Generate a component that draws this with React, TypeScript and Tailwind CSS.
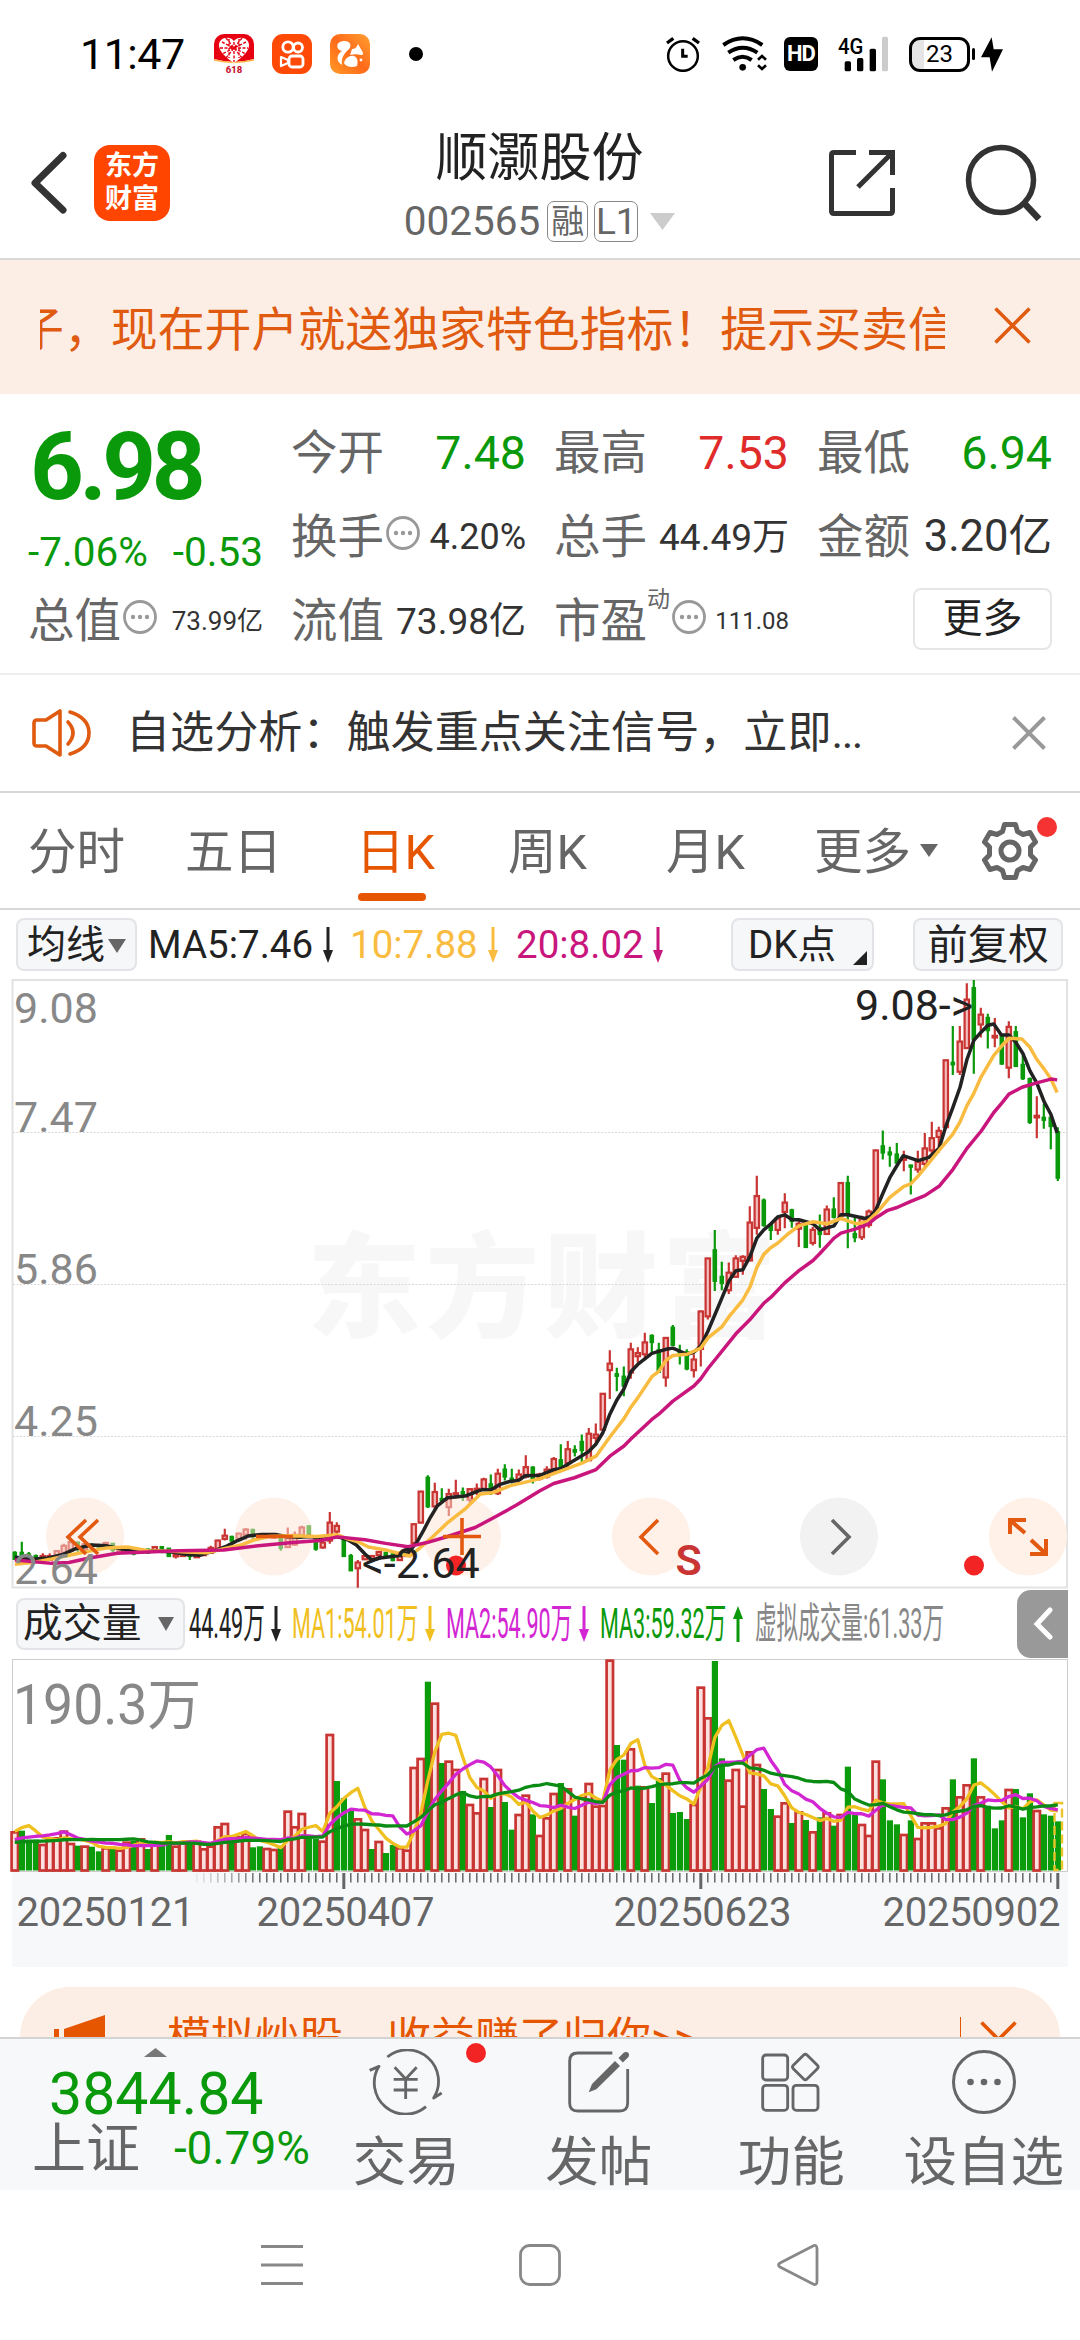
import { ReactNode } from "react";
import clsx from "clsx";

const GREEN = "#0a990a";
const RED = "#c83532";

// [color, bar top] - the baseline sits at 875, full height is 633
const volumes =
  "r757 g755 g782 g782 r795 r778 r775 r755 r792 g800 r800 g803 g817 r805 g803 r812 r788 g785 r778 g810 r788 g795 g768 r800 r790 " +
  "g788 r785 r808 r800 r742 r732 g780 r772 r762 g805 g802 r807 r810 g805 r695 r742 r702 g780 g780 r785 r465 g606 g657 g693 r718 " +
  "r750 g810 r786 g822 g798 r805 r812 r564 r537 g308 r371 g552 r545 r570 g636 r675 r700 r597 g684 r570 g669 g752 r705 r647 g706 " +
  "r768 r715 r642 g612 r628 g710 r655 r612 r680 r678 r242 g498 g542 r508 g620 r622 g672 g597 r581 g702 g699 g720 r675 r323 r415 " +
  "g246 g538 r602 r570 r680 r517 r555 g630 g690 r710 r670 g732 r697 g723 r757 g715 r700 g740 r705 g563 g708 r735 r768 r545 g601 " +
  "g724 g736 r765 g724 r777 r730 r730 r745 r685 g601 r652 r616 g538 r652 g680 g748 g724 r630 g630 g715 g643 r693 g706 g710 g727";

// color, high, body top, body bottom, low
const candles =
  "g1428,1432,1447,1449 g1405,1432,1447,1450 g1430,1436,1448,1450 g1436,1440,1450,1452 r1433,1440,1450,1452 r1433,1440,1449,1450 r1425,1428,1445,1447 r1410,1415,1432,1437 r1400,1406,1425,1430 g1405,1407,1420,1430 " +
  "r1408,1411,1425,1427 g1408,1412,1422,1428 g1410,1414,1420,1422 r1405,1408,1415,1420 g1408,1410,1425,1430 r1418,1420,1428,1430 r1418,1422,1428,1430 g1420,1424,1434,1438 r1425,1427,1432,1434 g1422,1424,1432,1434 " +
  "r1416,1418,1426,1430 g1416,1418,1428,1433 g1420,1422,1440,1442 r1432,1437,1441,1446 r1428,1434,1440,1442 g1428,1430,1440,1450 r1433,1437,1443,1445 r1425,1430,1438,1440 r1415,1420,1432,1434 r1400,1402,1422,1425 " +
  "r1373,1390,1398,1402 g1390,1393,1402,1408 r1383,1385,1398,1400 r1372,1375,1388,1400 g1373,1376,1392,1398 r1385,1388,1395,1396 r1385,1388,1394,1396 r1385,1388,1395,1398 g1390,1392,1420,1427 r1370,1395,1418,1420 " +
  "r1380,1388,1412,1415 r1366,1370,1390,1392 g1366,1367,1388,1390 g1390,1395,1422,1427 r1400,1407,1419,1422 r1332,1358,1402,1410 r1357,1366,1380,1386 g1400,1402,1440,1442 g1435,1440,1475,1477 r1450,1456,1470,1518 " +
  "r1438,1440,1448,1450 r1438,1440,1448,1450 r1428,1430,1438,1440 g1430,1432,1440,1442 g1432,1436,1450,1453 r1435,1440,1450,1452 r1430,1432,1440,1442 r1360,1362,1408,1412 r1280,1282,1358,1360 g1242,1248,1318,1322 " +
  "r1260,1283,1318,1330 g1274,1300,1302,1310 r1275,1288,1320,1342 r1253,1286,1289,1300 g1272,1283,1286,1305 r1274,1276,1302,1310 r1262,1275,1278,1290 r1248,1252,1276,1278 g1240,1264,1275,1290 r1226,1238,1286,1290 " +
  "g1215,1228,1245,1255 g1226,1250,1255,1262 r1228,1240,1252,1254 r1193,1222,1245,1250 g1220,1223,1250,1262 r1236,1240,1250,1255 r1220,1228,1245,1250 r1197,1202,1235,1237 g1166,1205,1220,1222 r1158,1178,1212,1222 " +
  "g1168,1180,1184,1196 g1142,1160,1180,1210 r1126,1140,1205,1207 r1115,1142,1150,1170 r1040,1042,1130,1132 r935,968,984,1055 g978,994,998,1036 g975,1000,1022,1048 r917,933,990,1005 r928,942,950,965 " +
  "r892,916,945,960 g896,900,915,940 g917,935,988,990 r903,905,1002,1025 g873,880,922,924 g922,942,946,970 g933,940,980,984 r945,958,984,1002 r838,840,932,975 r708,710,852,860 " +
  "g640,690,765,790 g718,755,770,788 r720,745,788,797 r702,710,755,757 r702,706,716,750 r582,622,715,717 r507,557,635,652 g563,568,628,632 g622,628,640,665 r605,612,640,652 " +
  "r550,573,596,636 g588,592,618,635 r618,625,637,682 g618,626,682,684 r632,640,672,678 g602,635,650,684 r580,590,650,652 g560,590,608,612 r523,525,605,607 g507,525,600,685 " +
  "g608,650,658,670 r605,612,658,665 r590,595,628,635 r443,445,590,592 g396,435,450,467 g436,450,455,485 g427,455,475,477 r446,465,468,496 g480,482,485,553 r446,473,492,500 " +
  "r402,440,478,485 r375,415,445,460 r387,397,412,450 r222,224,388,390 g140,230,234,260 r140,178,252,260 r35,75,194,196 g27,47,172,257 r95,112,136,168 g110,120,150,195 " +
  "r120,164,168,192 g160,165,232,235 r128,142,242,268 g140,155,238,240 g205,235,268,272 g266,270,375,380 r312,360,364,415 g330,365,370,392 g355,365,385,442 g388,400,512,520";

const ma5 =
  "43,1443 100,1447 140,1445 180,1437 220,1422 265,1413 310,1415 350,1422 400,1427 450,1427 500,1430 540,1436 580,1438 620,1428 660,1415 690,1402 720,1391 760,1387 800,1387 830,1392 870,1394 900,1392 930,1396 980,1392 1010,1400 1035,1413 1060,1435 1080,1450 1110,1444 1150,1440 1185,1432 1210,1407 1230,1377 1250,1345 1270,1317 1300,1297 1350,1293 1400,1277 1425,1278 1450,1265 1480,1257 1505,1255 1525,1243 1568,1242 " +
  "1608,1228 1629,1225 1668,1205 1708,1185 1731,1165 1751,1137 1771,1092 1791,1058 1812,1030 1832,988 1852,970 1893,943 1934,933 1954,930 1995,945 2015,940 2035,925 2056,888 2076,848 2096,808 2117,765 2137,740 2157,738 2178,705 2198,660 2218,640 2239,625 2259,608 2279,603 2300,615 2320,615 2361,625 2381,640 2422,630 2442,603 2462,603 2513,612 2528,607 2544,590 2564,550 2584,512 2605,482 2623,458 2666,470 2698,462 2727,440 2747,385 2767,340 2788,290 2808,222 2828,175 2849,155 2869,138 2886,135 2908,162 2930,162 2950,180 2971,208 2991,250 3011,280 3032,325 3052,357 3070,402";
const ma10 =
  "43,1460 100,1455 150,1447 200,1438 260,1428 310,1420 370,1418 430,1427 500,1428 540,1430 600,1432 650,1422 700,1413 740,1400 780,1392 850,1390 920,1392 980,1388 1010,1398 1040,1405 1070,1418 1120,1425 1165,1435 1190,1440 1210,1427 1250,1398 1300,1358 1350,1325 1395,1288 1430,1285 1480,1268 1520,1260 1568,1250 " +
  "1608,1238 1649,1225 1690,1212 1731,1195 1771,1148 1812,1103 1832,1075 1852,1052 1893,1000 1913,987 1934,960 1954,948 1995,945 2035,930 2056,905 2096,878 2117,853 2157,812 2178,780 2198,732 2218,700 2239,683 2259,672 2288,650 2320,630 2361,620 2401,625 2442,612 2488,625 2518,620 2544,600 2584,560 2625,533 2645,527 2666,508 2727,445 2767,405 2788,375 2808,335 2828,305 2849,265 2886,212 2913,185 2930,170 2968,172 2991,192 3011,222 3032,245 3052,270 3070,303";
const ma20 =
  "43,1450 150,1458 200,1456 260,1445 340,1433 430,1430 520,1427 650,1425 750,1415 850,1407 930,1402 980,1393 1060,1400 1120,1409 1185,1417 1240,1407 1300,1392 1380,1370 1440,1343 1500,1315 1568,1280 " +
  "1608,1262 1668,1248 1731,1228 1771,1195 1812,1170 1832,1153 1893,1105 1913,1092 1954,1060 2015,1023 2035,1005 2056,980 2137,895 2178,860 2198,840 2218,820 2239,805 2279,770 2320,740 2361,715 2381,698 2422,660 2442,648 2483,638 2523,625 2544,610 2578,592 2605,585 2645,570 2686,556 2727,533 2767,492 2808,440 2849,398 2886,352 2908,330 2930,307 2968,290 3008,280 3052,270 3070,272";

const bars = volumes.split(" ").map((v) => ({ up: v[0] === "r", top: Number(v.slice(1)) }));
const sticks = candles.split(" ").map((c) => {
  const [high, open, close, low] = c.slice(1).split(",").map(Number);
  return { up: c[0] === "r", high, open, close, low };
});

const barX = (i: number) => 14.8 + i * 7;
const priceY = (v: number) => 970 + v / 2.453;
const volumeY = (v: number) => 1580 + v / 3;

// sessions before the first visible bar, needed for the averages
const history = [...Array(10).fill(798), ...Array(5).fill(807), 807, 811, 811, 703, 703];

function average(n: number) {
  const all = [...history, ...bars.map((b) => b.top)];
  return bars
    .map((_, i) => {
      const part = all.slice(i + 21 - n, i + 21);
      const mean = part.reduce((a, b) => a + b, 0) / n;
      return `${barX(i)},${volumeY(mean)}`;
    })
    .join(" ");
}

const Down = ({ up }: { up?: boolean }) => (
  <svg width="10" height="36" viewBox="0 0 10 36" className={clsx("shrink-0", up && "rotate-180")}>
    <path d="M5 0V27" stroke="currentColor" strokeWidth="3" />
    <path d="M0 23H10L5 36Z" fill="currentColor" />
  </svg>
);

const Close = ({ size, width = 3.6 }: { size: number; width?: number }) => (
  <svg width={size} height={size} viewBox={`0 0 ${size} ${size}`} fill="none" stroke="currentColor" strokeWidth={width}>
    <path d={`M1.5 1.5L${size - 1.5} ${size - 1.5}M${size - 1.5} 1.5L1.5 ${size - 1.5}`} />
  </svg>
);

const Caret = ({ w, h, className }: { w: number; h: number; className?: string }) => (
  <svg width={w} height={h} viewBox="0 0 10 10" preserveAspectRatio="none" className={clsx("shrink-0", className)}>
    <path d="M0 0H10L5 10Z" fill="currentColor" />
  </svg>
);

const Dots = () => (
  <svg width="34" height="34" viewBox="0 0 34 34" className="mb-2 ml-[2px] shrink-0 text-[#999]">
    <circle cx="17" cy="17" r="15.5" fill="none" stroke="currentColor" strokeWidth="2.8" />
    <circle cx="10" cy="17" r="2.2" fill="currentColor" />
    <circle cx="17" cy="17" r="2.2" fill="currentColor" />
    <circle cx="24" cy="17" r="2.2" fill="currentColor" />
  </svg>
);

const StatusBar = () => (
  <div className="flex h-[108px] items-center pl-[80px] text-black">
    <span className="w-[134px] whitespace-nowrap text-[43px] leading-none tracking-[-0.5px]">11:47</span>
    <svg width="40" height="40" viewBox="0 0 40 40">
      <defs>
        <clipPath id="app-a"><rect width="40" height="40" rx="10" /></clipPath>
      </defs>
      <g clipPath="url(#app-a)">
        <rect width="40" height="29" fill="#e60012" />
        <path d="M0 25Q20 31 40 25V40H0Z" fill="#fff" />
        <path d="M0 26Q20 31 40 26" stroke="#ffb84d" strokeWidth="1.5" fill="none" />
      </g>
      <path d="M20 29C11 23 5 17 5 11C5 4 15 1 20 7C25 1 35 4 35 11C35 17 29 23 20 29Z" fill="#fff" />
      <path d="M20 8V28M8 8L32 20M32 8L8 20M12 4L28 24M28 4L12 24M6 14H34M15 5L15 24M25 5V24" stroke="#e60012" strokeWidth="1.4" strokeDasharray="3 1.5" />
      <text x="20" y="38.5" textAnchor="middle" fontSize="9.5" fontWeight="800" fill="#c8102e">618</text>
    </svg>
    <svg width="40" height="40" viewBox="0 0 40 40" className="ml-[18px]" fill="none" stroke="#fff" strokeWidth="2.8">
      <rect width="40" height="40" rx="11" fill="#ff4906" stroke="none" />
      <circle cx="16" cy="13" r="5.2" />
      <circle cx="26" cy="13.5" r="4.5" />
      <rect x="17" y="22" width="14" height="11" rx="3" />
      <path d="M9 23L16 26V29L9 32Z" strokeWidth="2.2" strokeLinejoin="round" />
    </svg>
    <svg width="40" height="40" viewBox="0 0 40 40" className="ml-[18px]">
      <defs>
        <linearGradient id="uc" x1="0" y1="1" x2="1" y2="0">
          <stop offset="0" stopColor="#ff9a26" />
          <stop offset=".5" stopColor="#ff6a1a" />
          <stop offset="1" stopColor="#ffa030" />
        </linearGradient>
      </defs>
      <rect width="40" height="40" rx="10" fill="url(#uc)" />
      <path d="M12 31C5 27 7 20 12 17C6 16 5 8 13 7C21 6 23 13 17 17C14 20 11 24 12 31Z" fill="#fff" />
      <path d="M22 15C25 15 27 13 28 10L32 17C34 20 33 21 31 21C28 20 24 20 20 21Z" fill="#fff" />
      <path d="M14 29C15 24 20 21 24 22C28 24 28 28 27 32C22 34 16 33 14 29Z" fill="#fff" />
      <circle cx="31" cy="26" r="1.4" fill="#fff" />
    </svg>
    <span className="ml-[39px] size-[14px] rounded-full bg-black" />
    <svg className="ml-[243px]" width="34" height="36" viewBox="78 50 102 108" fill="none" stroke="#000" strokeWidth="7.500">
      <circle cx="129" cy="110" r="44.5" />
      <path d="M128 88V111H143" strokeWidth="9" />
      <path d="M81 71L100 57M177 71L158 57" strokeWidth="10" />
    </svg>
    <svg className="ml-[22px]" width="45" height="36" viewBox="245 48 135 108" fill="none" stroke="#000" strokeWidth="12">
      <path d="M249 75Q307 35 366 75M264 98Q307 68 351 98M279 120Q307 101 334 120" />
      <circle cx="307" cy="142" r="10" fill="#000" stroke="none" />
      <path d="M353 119L365 108L377 119M353 136L365 147L377 136" strokeWidth="8" />
    </svg>
    <span className="ml-[17px] flex h-[34px] w-[34px] items-center justify-center rounded-[6px] bg-black text-[22px] font-bold leading-none tracking-[-1px] text-white">
      HD
    </span>
    <svg className="ml-[20px]" width="51" height="40" viewBox="594 40 153 120">
      <text x="594" y="99" fontSize="65" fontWeight="500" textLength="76" lengthAdjust="spacingAndGlyphs">4G</text>
      <rect x="614" y="122" width="19" height="30" rx="5" />
      <rect x="651" y="112" width="19" height="40" rx="5" />
      <rect x="689" y="84" width="19" height="68" rx="5" />
      <rect x="726" y="48" width="18" height="104" rx="5" fill="#ccc" />
    </svg>
    <span className="ml-[20px] flex h-[35px] w-[61px] items-center rounded-[11px] border-[3.5px] border-black bg-linear-to-r from-[#e5e5e5] from-22% to-white to-22% pl-[14px] text-[24px] leading-none">
      23
    </span>
    <span className="ml-[2px] h-[12px] w-[3px] rounded-full bg-black" />
    <svg className="ml-[6px]" width="22" height="35" viewBox="1020 50 66 104">
      <path d="M1052 50L1020 110H1046L1053 154L1086 86H1058Z" />
    </svg>
  </div>
);

const Header = () => (
  <div className="flex h-[152px] items-center border-b-2 border-[#d8d8d8] text-[#333]">
    <svg className="ml-[29px]" width="39" height="64" viewBox="0 0 39 64" fill="none" stroke="#333" strokeWidth="7" strokeLinecap="round">
      <path d="M34 4.500L6 32L34 59" strokeLinejoin="round" />
    </svg>
    <div className="ml-[26px] flex size-[76px] flex-col items-center justify-center rounded-[16px] bg-[#ff4500] text-[27px] font-bold leading-[33px] text-white">
      <span>东方</span>
      <span>财富</span>
    </div>
    <div className="ml-[231px] flex w-[277px] flex-col items-center pt-[7px]">
      <h1 className="text-[52px] leading-[64px] text-[#222]">顺灏股份</h1>
      <div className="mt-[5px] flex h-[50px] items-center text-[40.500px] text-[#666]">
        <span className="mr-[7px]">002565</span>
        <span className="flex size-[41px] items-center justify-center rounded-[7px] border-[1.5px] border-[#888] text-[33px] leading-none">融</span>
        <span className="ml-[6px] flex h-[41px] w-[44px] items-center justify-center rounded-[7px] border-[1.5px] border-[#888] text-[37px] leading-none">L1</span>
        <Caret w={25} h={17} className="ml-[12px] text-[#ccc]" />
      </div>
    </div>
    <svg className="ml-[150px]" width="68" height="68" viewBox="0 0 68 68" fill="none" stroke="#333" strokeWidth="5">
      <path d="M28 3.500H6Q3.500 3.500 3.500 6V62Q3.500 64.500 6 64.500H62Q64.500 64.500 64.500 62V39M41 3.500H64.500V26M64 4L30 38" />
    </svg>
    <svg className="ml-[69px]" width="78" height="78" viewBox="0 0 78 78" fill="none" stroke="#333">
      <circle cx="36" cy="36" r="32.500" strokeWidth="5.500" />
      <path d="M59 59L74 75" strokeWidth="6.500" />
    </svg>
  </div>
);

const Marquee = () => (
  <div className="flex h-[134px] items-center bg-[#fceee5] pl-[40px] text-[#e05a10]">
    <div className="w-[905px] overflow-hidden whitespace-nowrap pt-[5px] text-[46.9px] leading-[60px]">
      <span className="-ml-[23px]">子，现在开户就送独家特色指标！提示买卖信号</span>
    </div>
    <div className="mb-[4px] ml-[49px]"><Close size={37} /></div>
  </div>
);

const Quote = ({ label, tip, className, children }: { label: string; tip?: ReactNode; className: string; children: string }) => (
  <div className="flex h-[84px] items-center justify-between whitespace-nowrap">
    <span className="flex items-center text-[46.500px] text-[#666]">{label}{tip}</span>
    <span className={className}>{children}</span>
  </div>
);

const Quotes = () => (
  <div className="flex h-[281px] border-b-2 border-[#eee] pl-[28px] pt-[17px] leading-none">
    <div className="flex w-[235px] flex-col">
      <div className="h-[114px] pl-[2px] pt-[9px] text-[94px] font-bold tracking-[-4.500px]" style={{ color: GREEN }}>6.98</div>
      <div className="flex h-[54px] items-center justify-between text-[40.500px]" style={{ color: GREEN }}>
        <span>-7.06%</span>
        <span>-0.53</span>
      </div>
      <Quote label="总值" tip={<Dots />} className="text-[26px] text-[#333]">73.99亿</Quote>
    </div>
    <div className="ml-[28px] w-[235px]">
      <Quote label="今开" className="text-[46.500px] text-[#0a990a]">7.48</Quote>
      <Quote label="换手" tip={<Dots />} className="text-[36px] text-[#333]">4.20%</Quote>
      <Quote label="流值" className="text-[37px] text-[#333]">73.98亿</Quote>
    </div>
    <div className="ml-[28px] w-[235px]">
      <Quote label="最高" className="text-[46.500px] text-[#e02b2b]">7.53</Quote>
      <Quote label="总手" className="text-[37px] text-[#333]">44.49万</Quote>
      <Quote label="市盈" tip={<><span className="mb-[44px] text-[23px]">动</span><Dots /></>} className="text-[24px] text-[#333]">111.08</Quote>
    </div>
    <div className="ml-[28px] w-[235px]">
      <Quote label="最低" className="text-[46.500px] text-[#0a990a]">6.94</Quote>
      <Quote label="金额" className="text-[43.500px] text-[#333]">3.20亿</Quote>
      <button className="ml-auto mt-[9px] flex h-[62px] w-[139px] items-center justify-center rounded-[8px] border-2 border-[#e6e6e6] text-[40px] text-[#222]">更多</button>
    </div>
  </div>
);

const Notice = () => (
  <div className="flex h-[118px] items-center border-b-2 border-[#d8d8d8] pl-[32px]">
    <svg width="60" height="48" viewBox="0 0 60 48" fill="none" stroke="#e05a10" strokeWidth="3.600">
      <path d="M28 2V46L14 37H5Q2 37 2 34V14Q2 11 5 11H14Z" strokeLinejoin="round" />
      <path d="M36 13Q46 24 36 35M38 3Q57 9 57 24Q57 39 38 45" strokeLinecap="round" />
    </svg>
    <span className="ml-[34px] w-[847px] whitespace-nowrap text-[44.100px] text-[#333]">
      自选分析：触发重点关注信号，立即<span className="tracking-[-1.500px]">...</span>
    </span>
    <span className="ml-[39px] text-[#999]"><Close size={34} width={4} /></span>
  </div>
);

const tabs = [
  { name: "分时", width: "w-[157px]" },
  { name: "五日", width: "w-[171px]" },
  { name: "日K", width: "w-[152px]", active: true },
  { name: "周K", width: "w-[158px]" },
  { name: "月K", width: "w-[148px]" },
];

const Tabs = () => (
  <div className="flex h-[117px] items-center border-b-2 border-[#d8d8d8] pl-[28px] text-[48.500px] text-[#666]">
    {tabs.map((t) => (
      <div key={t.name} className={clsx("relative flex h-full shrink-0 items-center pt-[6px]", t.width, t.active && "text-[#e65500]")}>
        {t.name}
        {t.active && <i className="absolute bottom-[7px] left-[2px] h-[8px] w-[68px] rounded-full bg-[#e65500]" />}
      </div>
    ))}
    <span className="flex items-center whitespace-nowrap pt-[6px]">更多<Caret w={18} h={13} className="mb-[6px] ml-[9px]" /></span>
    <div className="relative ml-[42px]">
      <svg width="60" height="60" viewBox="0 0 60 60" fill="none" stroke="#666" strokeWidth="5" strokeLinejoin="round">
        <path d="M24.500 3.500H35.500L37.500 10.500L43 13.500L50 11.500L55.500 21L50.500 26V34L55.500 39L50 48.500L43 46.500L37.500 49.500L35.500 56.500H24.500L22.500 49.500L17 46.500L10 48.500L4.500 39L9.500 34V26L4.500 21L10 11.500L17 13.500L22.500 10.500Z" />
        <circle cx="30" cy="30" r="9" />
      </svg>
      <i className="absolute -right-[17px] -top-[4px] size-[20px] rounded-full bg-[#f53333]" />
    </div>
  </div>
);

const MaRow = () => (
  <div className="flex h-[69px] items-center pl-[16px] text-[38.500px] leading-none text-[#222]">
    <button className="flex h-[53px] w-[121px] items-center whitespace-nowrap rounded-[8px] border-2 border-[#e2e4e8] bg-[#f6f7f9] pl-[9px] pt-[2px] text-[39px]">
      均线<Caret w={18} h={14} className="ml-[3px] text-[#666]" />
    </button>
    <span className="ml-[11px] w-[175px] whitespace-nowrap pt-[2px]">MA5:7.46</span>
    <Down />
    <span className="ml-[17px] flex items-center text-[#f9bc40]"><span className="w-[138px] pt-[2px]">10:7.88</span><Down /></span>
    <span className="ml-[18px] flex items-center text-[#c9167d]"><span className="w-[137px] pt-[2px]">20:8.02</span><Down /></span>
    <button className="relative ml-[68px] flex h-[53px] w-[143px] items-center whitespace-nowrap rounded-[8px] border-2 border-[#e2e4e8] bg-[#f6f7f9] pl-[15px] pt-[2px]">
      DK点
      <svg className="absolute bottom-[4px] right-[5px]" width="14" height="14"><path d="M14 0V14H0Z" fill="#222" /></svg>
    </button>
    <button className="ml-[39px] flex h-[53px] w-[150px] items-center justify-center whitespace-nowrap rounded-[8px] border-2 border-[#e2e4e8] bg-[#f6f7f9] pt-[2px] text-[40.500px]">前复权</button>
  </div>
);

const axis = [
  { price: "9.08", y: 1024 },
  { price: "7.47", y: 1133 },
  { price: "5.86", y: 1285 },
  { price: "4.25", y: 1437 },
  { price: "2.64", y: 1585 },
];

const PriceChart = () => (
  <svg width="1080" height="610" viewBox="0 980 1080 610" className="block" fill="none">
    <text x="307" y="1329" fontSize="114" fontWeight="900" letterSpacing="4.500" fill="#f7f7f7">东方财富</text>
    <rect x="12.500" y="981" width="1054.500" height="607.500" stroke="#e2e2e2" strokeWidth="2" />
    {axis.slice(1, 4).map((a) => (
      <path key={a.y} d={`M13 ${a.y + 0.5}H1067`} stroke="#d8d8d8" strokeDasharray="2 1.5" />
    ))}
    {sticks.map((s, i) => {
      const top = priceY(s.open);
      const height = Math.max(priceY(s.close) - top, 1);
      const color = s.up ? RED : GREEN;
      return (
        <g key={i} stroke={color} strokeWidth="2.200">
          <path d={`M${barX(i)} ${priceY(s.high)}V${top}M${barX(i)} ${top + height}V${priceY(s.low)}`} />
          <rect x={barX(i) - (s.up ? 2.2 : 1.2)} y={top} width={s.up ? 4.4 : 2.4} height={height} fill={s.up ? "#f4bcbc" : color} />
        </g>
      );
    })}
    <circle cx="85" cy="1537.500" r="39" fill="#fde4d4" fillOpacity=".5" />
    <circle cx="274" cy="1537.500" r="39" fill="#fde4d4" fillOpacity=".5" />
    <circle cx="462" cy="1537.500" r="39" fill="#fde4d4" fillOpacity=".5" />
    <circle cx="651" cy="1537.500" r="39" fill="#fff0e8" />
    <circle cx="839" cy="1537.500" r="39" fill="#f2f2f2" />
    <circle cx="1028" cy="1537.500" r="39" fill="#fff0e8" />
    <circle cx="456" cy="1566.500" r="10" fill="#f32424" />
    <circle cx="974" cy="1566.500" r="10" fill="#f32424" />
    <g transform="translate(0 970) scale(.34435 .40766)" strokeWidth="3.500" strokeLinejoin="round">
      <polyline points={ma5} stroke="#222" vectorEffect="non-scaling-stroke" />
      <polyline points={ma10} stroke="#f9bc40" vectorEffect="non-scaling-stroke" />
      <polyline points={ma20} stroke="#c9167d" vectorEffect="non-scaling-stroke" />
    </g>
    <g stroke="#e2590f" strokeWidth="3.600">
      <path d="M86 1521L68 1538L86 1555M98 1521L80 1538L98 1555" />
      <path d="M256 1537.500H293M443 1537.500H481M462 1519V1556" />
      <path d="M658 1521L641 1538L658 1555" />
      <path d="M1010 1535V1521H1026M1011 1522L1025 1534M1046 1540V1555H1030M1045 1554L1031 1541" strokeWidth="4" />
    </g>
    <path d="M832 1521L849 1538L832 1555" stroke="#666" strokeWidth="3.600" />
    {axis.map((a) => (
      <text key={a.price} x="14" y={a.y} fontSize="43" fill="#888">{a.price}</text>
    ))}
    <text x="362" y="1579" fontSize="43" fill="#222">&lt;-2.64</text>
    <text x="855" y="1021" fontSize="43" fill="#222">9.08-&gt;</text>
    <text x="675.500" y="1575.500" fontSize="43" fontWeight="600" fill={RED}>S</text>
  </svg>
);

// the legend is printed in a condensed face
const Narrow = ({ className, children }: { className: string; children: string }) => (
  <span className={clsx("shrink-0 whitespace-nowrap", className)}>
    <span className="inline-block origin-left scale-x-[0.514]">{children}</span>
  </span>
);

const VolumeLegend = () => (
  <div className="flex h-[70px] items-center pl-[16px] text-[42px] leading-none text-[#222]">
    <button className="flex h-[52px] w-[169px] shrink-0 items-center whitespace-nowrap rounded-[8px] border-2 border-[#e2e4e8] bg-[#f6f7f9] pl-[5px] text-[39.500px]">
      成交量<Caret w={16} h={14} className="ml-[16px] text-[#666]" />
    </button>
    <Narrow className="ml-[4px] w-[82px]">44.49万</Narrow>
    <Down />
    <div className="ml-[11px] flex items-center text-[#f0c020]"><Narrow className="w-[133px]">MA1:54.01万</Narrow><Down /></div>
    <div className="ml-[11px] flex items-center text-[#d326d3]"><Narrow className="w-[133px]">MA2:54.90万</Narrow><Down /></div>
    <div className="ml-[11px] flex items-center text-[#0a990a]"><Narrow className="w-[133px]">MA3:59.32万</Narrow><Down up /></div>
    <Narrow className="ml-[12px] w-[262px] text-[#888]">虚拟成交量:61.33万</Narrow>
    <button className="flex h-[68px] w-[51px] shrink-0 items-center justify-center rounded-l-[14px] bg-[#999]">
      <svg width="20" height="34" viewBox="0 0 20 34" fill="none" stroke="#fff" strokeWidth="5" strokeLinecap="round">
        <path d="M17 3L4 17L17 30" />
      </svg>
    </button>
  </div>
);

const dates = [
  { text: "20250121", x: 16.5 },
  { text: "20250407", x: 256.5 },
  { text: "20250623", x: 613.5 },
  { text: "20250902", x: 882.5 },
];

const VolumeChart = () => (
  <svg width="1080" height="308" viewBox="0 1660 1080 308" className="block" fill="none">
    <rect x="12" y="1873" width="1056" height="95" fill="#f7f8fa" />
    <rect x="12.500" y="1660.500" width="1055" height="212" stroke="#ccc" />
    {bars.map((b, i) => {
      const top = volumeY(b.top);
      return b.up ? (
        <rect key={i} x={barX(i) - 3.2} y={top + 1} width="6.400" height={1870.5 - top} stroke={RED} strokeWidth="2.700" fill="#fbe0e0" />
      ) : (
        <rect key={i} x={barX(i) - 3} y={top} width="6.200" height={1871.5 - top} fill="#0a9c0a" />
      );
    })}
    <rect x="1054.500" y="1804" width="7.500" height="67" stroke="#ecc42c" strokeWidth="2.400" strokeDasharray="9 4" />
    <g strokeWidth="3.300" strokeLinejoin="round">
      <polyline points={average(5)} stroke="#f0c020" />
      <polyline points={average(10)} stroke="#d326d3" />
      <polyline points={average(20)} stroke="#0a8c14" />
    </g>
    {bars.map((_, i) => {
      if (i < 26) return null;
      const major = i === 47 || i === 98 || i === 149;
      return (
        <path key={i} d={`M${barX(i)} 1874V${major ? 1890 : 1883.5}`} stroke="#666" strokeWidth={major ? 3 : 1.5} opacity={Math.min(1, (i - 25) / 10)} />
      );
    })}
    <text x="13" y="1725" fontSize="55" fill="#888" textLength="188" lengthAdjust="spacingAndGlyphs">190.3万</text>
    {dates.map((d) => (
      <text key={d.text} x={d.x} y="1927" fontSize="40" textLength="178" fill="#666">{d.text}</text>
    ))}
  </svg>
);

const Promo = () => (
  <div className="h-[70px] overflow-hidden pt-[20px]">
    <div className="mx-[20px] flex h-[104px] items-center rounded-[50px] bg-[#fceee5] pl-[34px] text-[44px] leading-none text-[#e65500]">
      <svg width="52" height="48" viewBox="0 0 52 48" fill="#e65500">
        <path d="M0 14H5V34H0ZM10 14L51 0V48L10 34Z" />
      </svg>
      <span className="ml-[61px] w-[793px]">模拟炒股，收益赚了归你&gt;&gt;</span>
      <i className="h-[44px] w-px bg-[#e65500]" />
      <span className="ml-[19px]"><Close size={37} /></span>
    </div>
  </div>
);

const TradeIcon = () => (
  <svg width="74" height="66" viewBox="88 58 222 198" fill="none" stroke="#666" strokeWidth="8.500">
    <path d="M143 82A94 94 0 0 1 282 205L306 190M259 231A94 94 0 0 1 118 110L90 122" strokeLinejoin="round" />
    <path d="M165 113L198 148L231 113M162 149H234M162 181H234M198 148V208" />
  </svg>
);

const PostIcon = () => (
  <svg width="62" height="62" viewBox="683 64 186 186" fill="none" stroke="#666" strokeWidth="8.500">
    <path d="M816 70H712Q688 70 688 94V220Q688 244 712 244H838Q862 244 862 220V118" />
    <path d="M745 188L755 163L824 94L839 109L768 179Z" fill="#666" stroke="none" />
    <path d="M841 92L856 77" strokeWidth="19" />
    <circle cx="857" cy="76" r="9" fill="#666" stroke="none" />
  </svg>
);

const GridIcon = () => (
  <svg width="60" height="60" viewBox="1264 66 180 180" fill="none" stroke="#666" strokeWidth="8.500" strokeLinejoin="round">
    <rect x="1269" y="75" width="75" height="75" rx="10" />
    <rect x="1269" y="166" width="75" height="75" rx="10" />
    <rect x="1360" y="166" width="75" height="75" rx="10" />
    <rect x="1368" y="82" width="58" height="58" rx="7" transform="rotate(45 1397 111)" />
  </svg>
);

const MoreIcon = () => (
  <svg width="64" height="64" viewBox="0 0 64 64" fill="#666">
    <circle cx="32" cy="32" r="30.500" fill="none" stroke="#666" strokeWidth="3" />
    <circle cx="18.500" cy="32" r="3.300" />
    <circle cx="32" cy="32" r="3.300" />
    <circle cx="45.500" cy="32" r="3.300" />
  </svg>
);

const NavItem = ({ icon, label, dot }: { icon: ReactNode; label: string; dot?: boolean }) => (
  <div className="relative flex w-[192.500px] flex-col items-center whitespace-nowrap text-[53.500px] leading-none">
    <div className="flex h-[86px] items-center">{icon}</div>
    <span className="mt-[11px]">{label}</span>
    {dot && <i className="absolute left-[156px] top-[4px] size-[20px] rounded-full bg-[#f32424]" />}
  </div>
);

const BottomBar = () => (
  <div className="flex h-[153px] border-t-2 border-[#d3d3d3] bg-[#f7f8fa] text-[#666]">
    <div className="w-[310px] leading-none">
      <Caret w={23} h={9} className="ml-[144px] mt-[9px] rotate-180 text-[#777]" />
      <div className="ml-[49px] mt-[7px] text-[59px]" style={{ color: GREEN }}>3844.84</div>
      <div className="ml-[32px] flex w-[278px] items-center justify-between text-[54px]">
        上证<span className="mt-[-4px] text-[46px]" style={{ color: GREEN }}>-0.79%</span>
      </div>
    </div>
    <NavItem icon={<TradeIcon />} label="交易" dot />
    <NavItem icon={<PostIcon />} label="发帖" />
    <NavItem icon={<GridIcon />} label="功能" />
    <NavItem icon={<MoreIcon />} label="设自选" />
  </div>
);

const SystemKeys = () => (
  <div className="flex h-[149px] items-center justify-between pl-[261px] pr-[261px]">
    <svg width="42" height="42" viewBox="0 0 42 42" stroke="#888" strokeWidth="3.200"><path d="M0 2.500H42M0 21H42M0 39.500H42" /></svg>
    <svg width="42" height="42" viewBox="0 0 42 42" fill="none" stroke="#888" strokeWidth="2.800"><rect x="1.500" y="1.500" width="39" height="39" rx="9" /></svg>
    <svg width="42" height="42" viewBox="0 0 42 42" fill="none" stroke="#888" strokeWidth="2.800" strokeLinejoin="round"><path d="M36 2Q40 0 40 5V37Q40 42 36 40L3 23Q0 21 3 19Z" /></svg>
  </div>
);

export default function App() {
  return (
    <main className="h-[2340px] w-[1080px] overflow-hidden bg-white font-['Roboto','Noto_Sans_CJK_SC',sans-serif]">
      <StatusBar />
      <Header />
      <Marquee />
      <Quotes />
      <Notice />
      <Tabs />
      <MaRow />
      <PriceChart />
      <VolumeLegend />
      <VolumeChart />
      <Promo />
      <BottomBar />
      <SystemKeys />
    </main>
  );
}
